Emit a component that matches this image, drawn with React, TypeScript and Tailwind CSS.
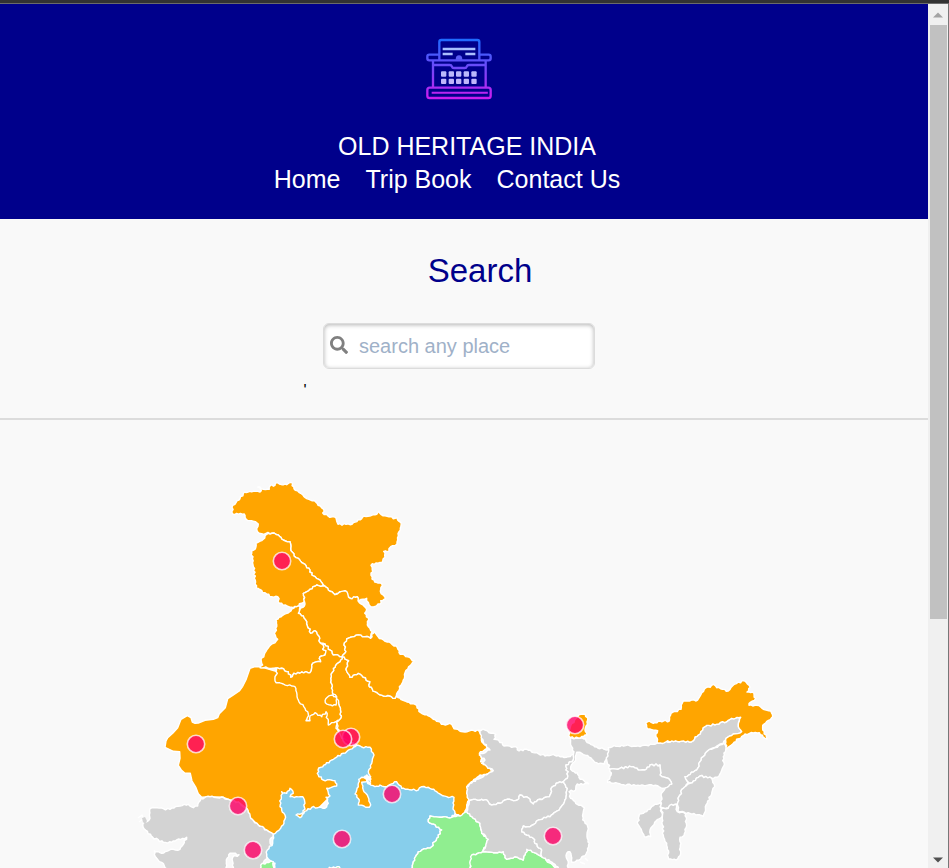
import React from "react";
import { FaSearch } from "react-icons/fa";

type Sheet = "north" | "punjab" | "west" | "central" | "east" | "northeast";

// Map sheets: each is digitised at three units per map unit from its own corner.
const ORIGIN: Record<Sheet, [number, number]> = {
  north: [220, 470],
  punjab: [240, 590],
  west: [130, 650],
  central: [290, 690],
  east: [460, 700],
  northeast: [590, 670],
};

const ORANGE = "#ffa500";
const BLUE = "#87ceeb";
const GREEN = "#90ee90";
const GRAY = "#d3d3d3";

type Region = { name: string; sheet: Sheet; fill: string; smooth?: boolean; points: string };

const regions: Region[] = [
  {
    name: "Rajasthan", sheet: "west", fill: ORANGE, smooth: true,
    points: "390,50 375,50 360,55 348,89 338,109 328,123 308,136 293,146 286,173 268,191 263,203 250,208 225,211 205,219 195,220 187,216 183,203 172,197 153,208 143,233 128,250 113,263 108,273 105,292 130,304 149,305 150,325 145,346 154,360 165,370 181,370 186,393 198,413 205,431 215,442 240,440 280,442 300,450 330,460 350,475 362,505 385,525 410,540 430,553 480,560 620,420 680,300 620,215 560,100",
  },
  {
    name: "Uttar Pradesh", sheet: "central", fill: ORANGE,
    points: "156,-100 176,-88 168,-62 180,-38 205,-50 220,-38 240,-25 238,-10 255,5 280,18 300,18 315,25 320,18 345,33 375,43 392,68 410,74 430,88 460,103 485,103 492,116 525,126 545,120 567,123 575,140 574,150 592,175 568,190 578,205 572,215 600,235 612,245 570,255 540,280 530,290 532,310 538,330 530,345 525,370 510,378 495,370 400,340 235,310 200,165 155,145 147,120 138,115 140,95 152,85 148,48 128,12 122,-35 130,-65 150,-85",
  },
  {
    name: "Ladakh", sheet: "north", fill: ORANGE,
    points: "36,112 48,98 60,86 73,66 100,64 120,66 124,62 113,51 130,58 148,58 150,48 165,46 172,38 185,44 200,44 213,37 222,56 242,70 252,80 267,88 287,96 294,106 311,118 308,129 324,138 348,144 354,163 390,164 400,158 425,146 432,138 455,136 470,133 476,124 484,134 507,140 520,146 531,143 543,158 537,185 531,222 512,230 507,244 491,244 495,262 486,278 457,281 453,286 458,305 453,316 464,336 485,341 481,364 497,385 482,392 480,402 460,411 447,404 440,385 418,392 415,405 412,380 395,388 385,380 375,362 355,370 345,374 325,360 314,348 300,330 275,315 270,300 250,280 235,265 222,258 212,235 210,215 190,210 175,195 155,190 138,190 118,190 110,176 115,162 100,154 78,147 73,132 38,132",
  },
  {
    name: "Jammu and Kashmir", sheet: "north", fill: ORANGE,
    points: "140,193 155,190 175,195 190,210 210,215 212,235 222,258 235,265 250,280 270,300 275,315 300,330 314,348 290,345 270,358 250,370 254,392 230,410 215,412 178,400 173,380 155,380 140,372 108,354 106,330 100,290 95,243 106,237 108,220 130,208",
  },
  {
    name: "Himachal Pradesh", sheet: "punjab", fill: ORANGE,
    points: "190,10 210,-2 230,-15 254,-12 265,0 285,14 315,2 330,25 352,20 358,38 380,58 374,70 386,90 382,105 397,125 392,145 375,140 355,135 320,147 312,165 318,185 306,200 280,195 270,180 255,162 240,158 238,140 225,122 212,130 200,95 190,78 175,70 180,58 195,42",
  },
  {
    name: "Punjab", sheet: "punjab", fill: ORANGE,
    points: "165,50 153,63 128,76 108,89 110,110 103,130 113,148 93,164 78,184 63,209 68,225 60,233 105,235 125,235 145,245 152,262 162,250 185,246 210,248 215,225 230,215 242,215 240,200 255,195 258,182 248,178 250,165 240,158 238,140 225,122 212,130 200,95 190,78 175,70 180,50",
  },
  {
    name: "Haryana", sheet: "punjab", fill: ORANGE,
    points: "105,235 125,235 145,245 152,262 162,250 185,246 210,248 215,225 230,215 242,215 240,200 255,195 258,182 248,178 250,165 255,162 270,180 280,195 306,200 300,215 280,235 272,265 278,312 290,320 298,348 302,385 288,395 265,405 258,365 245,380 225,368 210,378 210,392 198,392 205,372 195,355 175,330 165,290 155,288 130,282 108,278 105,260 112,250",
  },
  {
    name: "Delhi", sheet: "punjab", fill: ORANGE,
    points: "262,322 278,315 290,325 288,345 272,345 256,338",
  },
  {
    name: "Uttarakhand", sheet: "punjab", fill: ORANGE,
    points: "306,200 318,185 312,165 320,147 355,135 375,140 392,145 402,123 414,140 442,156 472,173 477,188 523,212 498,241 493,266 483,286 470,311 465,325 450,318 430,318 405,305 388,290 390,275 370,262 355,250 330,262 318,238 326,212",
  },
  {
    name: "Gujarat", sheet: "west", fill: GRAY,
    points: "59,478 75,473 100,476 120,478 150,468 175,463 190,473 203,468 213,445 240,440 280,442 300,450 330,460 350,475 362,505 385,525 410,540 430,553 420,575 425,592 410,605 412,625 400,640 390,670 310,670 308,622 327,614 300,610 292,624 290,670 118,670 103,647 73,614 73,603 95,610 130,598 150,598 163,578 170,562 145,567 125,577 100,577 68,562 43,537 39,520 60,505",
  },
  {
    name: "Madhya Pradesh", sheet: "central", fill: BLUE,
    points: "-50,433 -40,425 -18,400 -15,375 -30,350 -25,305 -10,310 0,295 10,310 0,320 38,320 45,340 40,368 18,375 30,383 50,362 65,352 105,355 115,340 108,322 120,318 110,295 140,288 135,272 100,270 85,255 84,240 92,232 125,210 160,190 200,166 215,171 240,172 252,195 245,220 235,245 240,262 238,280 255,290 270,285 290,290 320,275 335,295 365,300 385,300 395,290 415,292 440,305 470,320 492,322 490,350 495,370 485,382 450,382 420,378 415,395 430,402 455,420 440,445 425,470 385,485 370,515 360,560 -100,560 -48,560 -45,520 -70,500 -68,480 -52,460",
  },
  {
    name: "Lalitpur", sheet: "central", fill: ORANGE,
    points: "206,268 215,262 242,260 228,275 215,277 222,305 232,315 242,345 238,352 222,348 205,345 208,330 195,312 205,290",
  },
  {
    name: "Chhattisgarh", sheet: "central", fill: GREEN,
    points: "420,378 450,382 485,382 510,378 530,365 550,385 570,400 575,430 597,448 578,485 550,495 540,534 540,560 360,560 370,515 385,485 425,470 440,445 455,420 430,402 415,395",
  },
  {
    name: "Odisha", sheet: "east", fill: GREEN,
    points: "68,455 35,465 30,504 30,530 300,530 278,495 245,470 200,448 190,480 165,470 140,478 130,455 100,458",
  },
  {
    name: "Maharashtra west", sheet: "west", fill: GREEN,
    points: "392,645 410,637 430,635 435,670 390,670",
  },
  {
    name: "Maharashtra north", sheet: "central", fill: GREEN,
    points: "118,532 148,530 155,560 120,560",
  },
  {
    name: "Bihar", sheet: "east", fill: GRAY,
    points: "56,90 75,90 87,98 107,103 102,118 127,128 132,138 167,140 177,153 200,148 215,156 230,158 255,168 280,163 300,170 325,170 340,163 340,180 318,195 318,210 325,215 322,235 310,245 295,248 275,262 268,290 240,298 220,312 210,298 180,285 172,300 135,300 120,310 95,315 85,305 65,298 28,302 20,280 20,262 30,250 60,235 100,212 65,190 75,180 58,165 90,150 70,125",
  },
  {
    name: "Jharkhand", sheet: "east", fill: GRAY,
    points: "28,302 65,298 85,305 95,315 120,310 135,300 172,300 180,285 210,298 220,312 240,298 268,290 275,262 295,248 310,245 322,265 318,295 300,325 270,350 235,360 210,380 190,378 185,395 200,405 220,415 225,430 245,450 245,470 200,448 190,480 165,470 140,478 130,455 100,458 68,455 85,418 65,400 60,370 40,355 20,335",
  },
  {
    name: "West Bengal", sheet: "east", fill: GRAY,
    points: "330,113 360,115 377,116 382,128 400,136 420,146 447,148 445,170 432,192 404,187 393,174 365,160 350,157 347,175 332,200 337,213 352,218 357,233 386,251 352,252 347,270 327,275 332,295 347,310 373,323 368,360 383,380 381,410 388,430 378,462 362,477 335,487 330,455 320,460 325,504 300,510 280,490 245,470 245,450 225,430 220,415 200,405 185,395 190,378 210,380 235,360 270,350 300,325 318,295 322,265 310,245 322,235 325,215 318,210 318,195 340,180 342,155 335,140",
  },
  {
    name: "Sikkim", sheet: "east", fill: ORANGE,
    points: "326,106 333,75 350,53 362,43 376,43 383,60 375,90 381,105 355,114 330,113",
  },
  {
    name: "Assam", sheet: "northeast", fill: GRAY,
    points: "55,233 95,226 150,230 200,220 245,213 305,215 325,195 345,170 410,155 425,145 452,142 445,165 455,185 430,192 408,205 400,220 350,245 330,275 320,300 285,320 295,340 280,355 270,375 262,402 240,410 225,418 213,412 213,375 225,352 245,342 235,325 210,315 210,285 180,285 165,300 145,300 130,290 60,298 50,270",
  },
  {
    name: "Arunachal Pradesh", sheet: "northeast", fill: ORANGE,
    points: "167,160 178,153 190,160 210,153 238,153 243,130 273,118 280,93 323,90 343,58 370,43 380,53 415,63 433,43 463,32 481,52 471,66 487,66 497,85 481,97 477,106 500,106 520,118 542,123 548,140 518,166 518,180 531,207 508,188 465,192 432,217 408,239 408,205 430,192 455,185 445,165 452,142 425,145 410,155 345,170 325,195 305,215 245,213 205,220 198,200 203,182 173,177",
  },
  {
    name: "Meghalaya", sheet: "northeast", fill: GRAY,
    points: "60,298 130,290 145,300 165,300 180,285 210,285 210,315 235,325 245,342 225,354 190,347 150,347 100,344 53,337 63,315",
  },
  {
    name: "Nagaland", sheet: "northeast", fill: GRAY,
    points: "402,220 407,240 400,260 400,290 387,318 365,325 330,318 300,340 285,320 320,300 330,275 350,245",
  },
  {
    name: "Manipur", sheet: "northeast", fill: GRAY,
    points: "300,340 330,318 365,325 374,350 352,400 340,439 300,430 265,425 262,402 270,375 280,355",
  },
  {
    name: "Mizoram", sheet: "northeast", fill: GRAY,
    points: "216,415 235,415 245,403 260,405 262,425 287,432 289,460 282,497 270,502 272,550 258,570 236,567 230,520 220,495",
  },
  {
    name: "Tripura", sheet: "northeast", fill: GRAY,
    points: "210,398 216,440 194,457 180,480 182,500 163,500 143,462 148,433 180,418 195,403",
  },
];

const markers: [number, number][] = [
  [282, 561],
  [196, 744],
  [351, 737],
  [343, 739],
  [238, 806],
  [253, 850],
  [342, 839],
  [392, 794],
  [553, 836],
  [575, 725],
];

const noise = (a: number, b: number) => {
  const v = Math.sin(a * 12.9898 + b * 78.233) * 43758.5453;
  return v - Math.floor(v) - 0.5;
};

// Adds small bends to each border; neighbours bend a shared border alike.
function outline({ sheet, points, smooth }: Region) {
  const [ox, oy] = ORIGIN[sheet];
  const pts = points.split(" ").map((p) => {
    const [x, y] = p.split(",").map(Number);
    return [ox + x / 3, oy + y / 3];
  });
  const out: number[][] = [];
  pts.forEach((a, i) => {
    const b = pts[(i + 1) % pts.length];
    out.push(a);
    const length = Math.hypot(b[0] - a[0], b[1] - a[1]);
    if (smooth || length < 3 || length > 30) return;
    const flip = a[0] > b[0] || (a[0] === b[0] && a[1] > b[1]);
    const [s, e] = flip ? [b, a] : [a, b];
    const n = Math.max(2, Math.round(length / 2));
    const bends: number[][] = [];
    for (let k = 1; k < n; k++) {
      const t = k / n;
      const x = s[0] + (e[0] - s[0]) * t;
      const y = s[1] + (e[1] - s[1]) * t;
      const d = noise(Math.round(x * 10), Math.round(y * 10)) * 2;
      bends.push([x - ((e[1] - s[1]) / length) * d, y + ((e[0] - s[0]) / length) * d]);
    }
    out.push(...(flip ? bends.reverse() : bends));
  });
  return "M" + out.map((p) => p.map((n) => n.toFixed(1)).join(",")).join("L") + "Z";
}

function IndiaMap() {
  return (
    <svg viewBox="0 420 928 448" className="block w-full" role="img" aria-label="Map of India">
      <g stroke="#ffffff" strokeWidth="1.4" strokeLinejoin="round">
        {regions.map((r) => (
          <path key={r.name} d={outline(r)} fill={r.fill} />
        ))}
        <path d="M336,721l2,5l-1,3l2,3" fill="none" />
        <path d="M138,818l4,-3l1,4l-4,3M585,858l3,3M580,862l5,2" fill="none" />
        <path d="M364,777l3,2l1,4l3,1M366,775l5,5" fill="none" strokeWidth="2.5" />
      </g>
      <path d="M142,818l3,-1l2,4l-2,3l-2,-2Z" fill={GRAY} />
      {markers.map(([x, y]) => (
        <circle
          key={`${x}-${y}`}
          cx={x}
          cy={y}
          r="8.7"
          fill="#ff0066"
          fillOpacity="0.8"
          stroke="#ffffff"
          strokeOpacity="0.75"
          strokeWidth="1.6"
        />
      ))}
    </svg>
  );
}

function Typewriter() {
  return (
    <svg width="66" height="62" viewBox="78 54 198 186" fill="none" aria-hidden="true">
      <defs>
        <linearGradient id="body" gradientUnits="userSpaceOnUse" x1="0" y1="58" x2="0" y2="236">
          <stop offset="0" stopColor="#1f6bff" />
          <stop offset="0.45" stopColor="#6a4bf8" />
          <stop offset="1" stopColor="#cc1cf0" />
        </linearGradient>
        <linearGradient id="keys" gradientUnits="userSpaceOnUse" x1="0" y1="80" x2="0" y2="195">
          <stop offset="0" stopColor="#a5c0ff" />
          <stop offset="1" stopColor="#c3b5fa" />
        </linearGradient>
      </defs>
      <g stroke="url(#body)" strokeWidth="7">
        <path d="M118,121V66q0,-6 6,-6h108q6,0 6,6v55" />
        <path d="M118,104H88q-6,0 -6,6v5q0,6 6,6h178q6,0 6,-6v-5q0,-6 -6,-6h-28" />
        <path d="M99,121v82M257,121v82M99,135h50q5,0 7,5q1,4 6,4h32q5,0 6,-4q2,-5 7,-5h50" />
        <rect x="82" y="203" width="190" height="31" rx="7" />
        <path d="M95,218.500h166v-1H95" strokeWidth="5" />
      </g>
      <path d="M167,119q0,-13 10,-13t10,13z" fill="#5b5cf5" />
      <path d="M128,87h98M128,102h30M196,102h30" stroke="url(#keys)" strokeWidth="7" />
      <g fill="url(#keys)">
        {[123, 146, 168, 191, 214].map((x) => (
          <React.Fragment key={x}>
            <rect x={x} y="154" width="16" height="16" rx="3" />
            <rect x={x} y="176" width="16" height="16" rx="3" />
          </React.Fragment>
        ))}
      </g>
    </svg>
  );
}

function ScrollTrack() {
  return (
    <div className="flex w-5 shrink-0 flex-col items-center bg-[#f0f0f0]" aria-hidden="true">
      <div className="flex h-[21px] items-center">
        <svg width="10" height="6" viewBox="0 0 10 6" fill="#a3a3a3">
          <path d="M0,5.500L5,0.500L10,5.500Z" />
        </svg>
      </div>
      <div className="flex w-full grow flex-col pr-px pl-0.5">
        <div className="basis-[594px] bg-[#c1c1c1]" />
      </div>
      <div className="flex h-4 items-center">
        <svg width="10" height="6" viewBox="0 0 10 6" fill="#505050">
          <path d="M0,0.500L5,5.500L10,0.500Z" />
        </svg>
      </div>
    </div>
  );
}

export default function App() {
  return (
    <div className="flex min-h-screen flex-col bg-[#f9f9f9] font-['Liberation_Sans',Arial,sans-serif]">
      <div className="h-1 border-b border-[#6b6b6b] bg-[#333333]" />
      <div className="flex grow border-r border-[#777777]">
        <div className="min-w-0 grow">
          <header className="flex flex-col items-center bg-[#00008b] pt-[34px] pb-[23px] text-[25px] leading-[33px] text-white">
            <a href="#home" aria-label="Old Heritage India" className="mr-[10px] mb-[30px]">
              <Typewriter />
            </a>
            <div className="ml-[6px]">OLD HERITAGE INDIA</div>
            <nav className="mr-[34px] flex gap-[25px]">
              <a href="#home">Home</a>
              <a href="#trips">Trip Book</a>
              <a href="#contact">Contact Us</a>
            </nav>
          </header>
          <section className="flex flex-col items-center border-b-2 border-[#dcdcdc] pt-8">
            <h1 className="ml-8 text-[33px] leading-10 text-[#00008b]">
              <label htmlFor="place">Search</label>
            </h1>
            <div className="mt-8 mr-[10px] flex h-[46px] w-[272px] items-center rounded-md border border-[#dcdcdc] bg-white pl-[6px] shadow-[inset_0_1px_4px_rgba(0,0,0,0.3)]">
              <FaSearch className="mb-0.5 size-[18px] shrink-0 text-[#808080]" />
              <input
                id="place"
                type="text"
                placeholder="search any place"
                className="ml-[11px] w-full min-w-0 bg-transparent text-xl outline-none placeholder:text-[#9fb1c8]"
              />
            </div>
            <p className="mt-[10px] mr-[318px] mb-[15px] text-base leading-6">'</p>
          </section>
          <main>
            <IndiaMap />
          </main>
        </div>
        <ScrollTrack />
      </div>
    </div>
  );
}
